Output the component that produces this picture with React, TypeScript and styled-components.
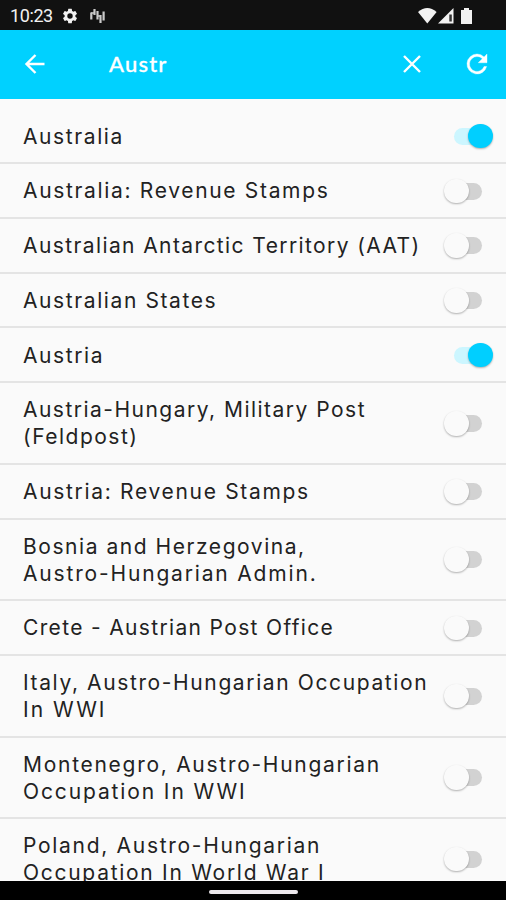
import React, { useState } from 'react';
import styled, { createGlobalStyle } from 'styled-components';

const GlobalStyle = createGlobalStyle`
  * { box-sizing: border-box; }
  html, body { margin: 0; background: #fafafa; }
  button { border: 0; padding: 0; background: none; color: inherit; display: flex; cursor: pointer; }
`;

const Screen = styled.div`
  width: 506px;
  height: 900px;
  display: flex;
  flex-direction: column;
  overflow: hidden;
  background: #fafafa;
`;

const StatusBar = styled.div`
  height: 29.5px;
  flex: none;
  display: flex;
  align-items: center;
  justify-content: space-between;
  padding: 2px 32px 0 10px;
  background: #111;
  color: #f2f2f2;
`;

const StatusGroup = styled.div`
  display: flex;
  align-items: center;
`;

const Clock = styled.span`
  width: 51px;
  font: 400 18px/22px Roboto, sans-serif;
  letter-spacing: -0.4px;
`;

const Notifications = styled.div`
  display: flex;
  align-items: center;
  gap: 11px;
`;

const AppBar = styled.header`
  height: 69px;
  flex: none;
  display: flex;
  align-items: center;
  padding: 0 14px 0 22px;
  background: #00d1ff;
  color: #fff;
`;

const Query = styled.div`
  flex: 1;
  padding: 0 0 0 61px;
  font: 500 22px/28px Lato, sans-serif;
  letter-spacing: 1.2px;
  color: #fff;
  -webkit-text-stroke: 0.3px #fff;
`;

const Actions = styled.div`
  display: flex;
  align-items: center;
  gap: 40px;
`;

const List = styled.main`
  flex: 1;
  min-height: 0;
  overflow: hidden;
  padding-top: 10.8px;
`;

const Row = styled.div`
  display: flex;
  align-items: center;
  justify-content: space-between;
  padding: 13.6px 13px 12.4px 23px;
  border-bottom: 2px solid #e4e4e4;
`;

const Name = styled.div`
  padding-top: 0.7px;
  margin-bottom: -0.7px;
  font: 400 21px/26.8px Inter, sans-serif;
  color: #222;
`;

const Line = styled.span<{ $tracking: number }>`
  display: block;
  white-space: nowrap;
  letter-spacing: ${(p) => p.$tracking}px;
`;

const Toggle = styled.button<{ $on: boolean }>`
  && { display: block; }
  position: relative;
  flex: none;
  width: 50px;
  height: 25px;

  &::before {
    content: '';
    position: absolute;
    left: ${(p) => (p.$on ? 11 : 6)}px;
    top: 4px;
    width: 33px;
    height: 17px;
    border-radius: 9px;
    background: ${(p) => (p.$on ? '#ccf6ff' : '#d2d2d2')};
  }

  &::after {
    content: '';
    position: absolute;
    left: ${(p) => (p.$on ? 25 : 1)}px;
    top: 0;
    width: 24.5px;
    height: 24.5px;
    border-radius: 50%;
    background: ${(p) => (p.$on ? '#00cfff' : '#fafafa')};
    box-shadow: 0 1px 2px rgba(0, 0, 0, 0.3);
  }
`;

const NavBar = styled.footer`
  height: 19px;
  flex: none;
  display: flex;
  justify-content: center;
  padding-top: 8.5px;
  background: #000;
`;

const HomePill = styled.div`
  width: 89px;
  height: 4px;
  border-radius: 2px;
  background: #ece8ec;
`;

type Country = { lines: [string, number][]; on?: boolean };

const countries: Country[] = [
  { lines: [['Australia', 1.6]], on: true },
  { lines: [['Australia: Revenue Stamps', 1.67]] },
  { lines: [['Australian Antarctic Territory (AAT)', 1.4]] },
  { lines: [['Australian States', 1.6]] },
  { lines: [['Austria', 1.6]], on: true },
  { lines: [['Austria-Hungary, Military Post', 1.48], ['(Feldpost)', 1.5]] },
  { lines: [['Austria: Revenue Stamps', 1.68]] },
  { lines: [['Bosnia and Herzegovina,', 1.55], ['Austro-Hungarian Admin.', 1.83]] },
  { lines: [['Crete - Austrian Post Office', 1.34]] },
  { lines: [['Italy, Austro-Hungarian Occupation', 1.62], ['In WWI', 2]] },
  { lines: [['Montenegro, Austro-Hungarian', 1.72], ['Occupation In WWI', 1.88]] },
  { lines: [['Poland, Austro-Hungarian', 1.7], ['Occupation In World War I', 1.72]] },
];

const GearIcon = () => (
  <svg width="18" height="18" viewBox="0 0 24 24" fill="currentColor">
    <path d="M19.14 12.94c.04-.3.06-.61.06-.94s-.02-.64-.07-.94l2.03-1.58a.49.49 0 0 0 .12-.61l-1.92-3.32a.49.49 0 0 0-.59-.22l-2.39.96a7 7 0 0 0-1.62-.94l-.36-2.54a.48.48 0 0 0-.48-.41h-3.84a.48.48 0 0 0-.47.41l-.36 2.54c-.59.24-1.13.57-1.62.94l-2.39-.96a.48.48 0 0 0-.59.22L2.74 8.87a.48.48 0 0 0 .12.61l2.03 1.58a6 6 0 0 0 0 1.88l-2.03 1.58a.49.49 0 0 0-.12.61l1.92 3.32c.12.22.37.29.59.22l2.39-.96c.5.38 1.03.7 1.62.94l.36 2.54c.05.24.24.41.48.41h3.84c.24 0 .44-.17.47-.41l.36-2.54a6.5 6.5 0 0 0 1.62-.94l2.39.96c.22.08.47 0 .59-.22l1.92-3.32a.48.48 0 0 0-.12-.61zM12 15.6a3.6 3.6 0 1 1 0-7.2 3.6 3.6 0 0 1 0 7.2z" />
  </svg>
);

const BarsIcon = () => (
  <svg width="15" height="16" viewBox="0 0 15 16" fill="none" stroke="#cacaca" strokeWidth="2.2">
    <path d="M1.3 4.5v7M4.5 1v6M7.5 3v8.5M10.5 7v8M13.600 3.500v9" />
    <path d="M1 5h4M7 8h4" strokeWidth="1.5" />
  </svg>
);

const SystemIcons = () => (
  <svg width="56" height="18" viewBox="0 0 56 18" fill="currentColor">
    <path d="M0 5Q9.3-3 18.6 5L9.3 16.500z" />
    <path d="M20 16.500L35.500 1V16.500z" />
    <path d="M31.300 7.500h2.500v7h-2.500z" fill="#333" />
    <path d="M43 3h3V1h5v2h3v14h-11z" />
  </svg>
);

const BackIcon = () => (
  <svg width="26" height="26" viewBox="0 0 26 26" fill="none" stroke="currentColor" strokeWidth="2.4">
    <path d="M22.5 13H5M13.5 4L4.5 13l9 9" />
  </svg>
);

const CloseIcon = () => (
  <svg width="20" height="20" viewBox="0 0 20 20" fill="none" stroke="currentColor" strokeWidth="2.4">
    <path d="M2 2l16 16M18 2L2 18" />
  </svg>
);

const RefreshIcon = () => (
  <svg width="30" height="30" viewBox="0 0 24 24" fill="currentColor" stroke="currentColor" strokeWidth="0.3">
    <path d="M17.65 6.35A7.96 7.96 0 0 0 12 4a8 8 0 1 0 7.73 10h-2.08A6 6 0 1 1 12 6c1.66 0 3.14.69 4.22 1.78L13 11h7V4z" />
  </svg>
);

export default function App() {
  const [enabled, setEnabled] = useState(countries.map((c) => !!c.on));
  const flip = (index: number) =>
    setEnabled((all) => all.map((on, i) => (i === index ? !on : on)));

  return (
    <Screen>
      <GlobalStyle />
      <StatusBar>
        <StatusGroup>
          <Clock>10:23</Clock>
          <Notifications>
            <GearIcon />
            <BarsIcon />
          </Notifications>
        </StatusGroup>
        <SystemIcons />
      </StatusBar>
      <AppBar>
        <button aria-label="Back"><BackIcon /></button>
        <Query>Austr</Query>
        <Actions>
          <button aria-label="Clear"><CloseIcon /></button>
          <button aria-label="Refresh"><RefreshIcon /></button>
        </Actions>
      </AppBar>
      <List>
        {countries.map((country, i) => (
          <Row key={i}>
            <Name>
              {country.lines.map(([text, tracking]) => (
                <Line key={text} $tracking={tracking}>{text}</Line>
              ))}
            </Name>
            <Toggle
              $on={enabled[i]}
              role="switch"
              aria-checked={enabled[i]}
              aria-label={country.lines.map(([text]) => text).join(' ')}
              onClick={() => flip(i)}
            />
          </Row>
        ))}
      </List>
      <NavBar>
        <HomePill />
      </NavBar>
    </Screen>
  );
}
